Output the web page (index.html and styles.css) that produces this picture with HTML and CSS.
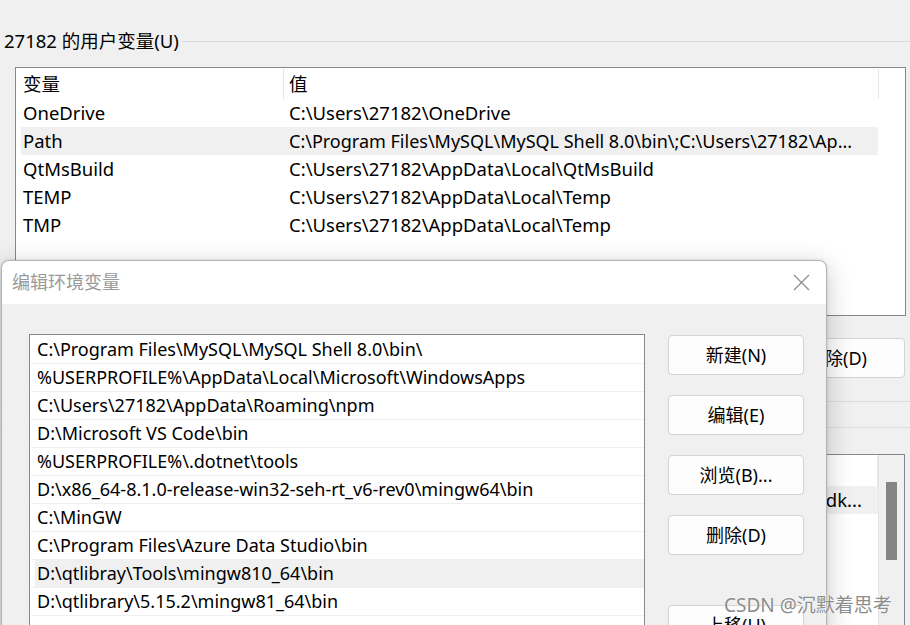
FILE: index.html
```html
<!DOCTYPE html>
<html lang="zh-CN">
<head>
<meta charset="utf-8">
<title>环境变量</title>
<link rel="stylesheet" href="styles.css">
</head>
<body>
<div class="window">
  <div class="group-title"><span>27182 的用户变量(U)</span><div class="rule"></div></div>
  <div class="lv user">
    <div class="lv-head">
      <div class="hc c1">变量</div>
      <div class="hc c2">值</div>
    </div>
    <div class="lv-row"><div class="c1">OneDrive</div><div class="c2">C:\Users\27182\OneDrive</div></div>
    <div class="lv-row sel"><div class="c1">Path</div><div class="c2 fit">C:\Program Files\MySQL\MySQL Shell 8.0\bin\;C:\Users\27182\Ap...</div></div>
    <div class="lv-row"><div class="c1">QtMsBuild</div><div class="c2">C:\Users\27182\AppData\Local\QtMsBuild</div></div>
    <div class="lv-row"><div class="c1">TEMP</div><div class="c2">C:\Users\27182\AppData\Local\Temp</div></div>
    <div class="lv-row"><div class="c1">TMP</div><div class="c2">C:\Users\27182\AppData\Local\Temp</div></div>
  </div>
  <div class="btn-row"><button class="btn">删除(D)</button></div>
  <div class="sep sep1"></div>
  <div class="sep sep2"></div>
  <div class="lv sys">
    <div class="sys-main">
      <div class="lv-head">
        <div class="hc c1">变量</div>
        <div class="hc c2">值</div>
      </div>
      <div class="lv-row sel"><div class="c1">JAVA_HOME</div><div class="c2 tail"><span>C:\Program Files\Java\jdk...</span></div></div>
    </div>
    <div class="vscroll"><div class="thumb"></div></div>
  </div>
</div>

<div class="dialog">
  <div class="dlg-title">
    <span class="dlg-caption">编辑环境变量</span>
    <svg class="dlg-close" width="17" height="17" viewBox="0 0 17 17"><path d="M1 1 L16 16 M16 1 L1 16" stroke="#8c8c8c" stroke-width="1.2" fill="none"/></svg>
  </div>
  <div class="dlg-body">
    <div class="path-list">
      <div class="p-row"><div class="p-txt">C:\Program Files\MySQL\MySQL Shell 8.0\bin\</div></div>
      <div class="p-row"><div class="p-txt">%USERPROFILE%\AppData\Local\Microsoft\WindowsApps</div></div>
      <div class="p-row"><div class="p-txt">C:\Users\27182\AppData\Roaming\npm</div></div>
      <div class="p-row"><div class="p-txt">D:\Microsoft VS Code\bin</div></div>
      <div class="p-row"><div class="p-txt">%USERPROFILE%\.dotnet\tools</div></div>
      <div class="p-row"><div class="p-txt">D:\x86_64-8.1.0-release-win32-seh-rt_v6-rev0\mingw64\bin</div></div>
      <div class="p-row"><div class="p-txt">C:\MinGW</div></div>
      <div class="p-row"><div class="p-txt">C:\Program Files\Azure Data Studio\bin</div></div>
      <div class="p-row sel"><div class="p-txt">D:\qtlibray\Tools\mingw810_64\bin</div></div>
      <div class="p-row"><div class="p-txt">D:\qtlibrary\5.15.2\mingw81_64\bin</div></div>
      <div class="p-row"><div class="p-txt"></div></div>
    </div>
    <div class="dlg-buttons">
      <button class="btn">新建(N)</button>
      <button class="btn">编辑(E)</button>
      <button class="btn">浏览(B)...</button>
      <button class="btn">删除(D)</button>
      <button class="btn move">上移(U)</button>
    </div>
  </div>
</div>

<div class="watermark">CSDN @沉默着思考</div>
</body>
</html>
```

FILE: styles.css
```css
* { box-sizing: border-box; }

html, body {
  margin: 0;
  padding: 0;
}

body {
  width: 910px;
  height: 625px;
  overflow: hidden;
  position: relative;
  background: #f0f0f0;
  font-family: "Noto Sans", "Noto Sans CJK SC", sans-serif;
  font-size: 18px;
  color: #000;
}

.window {
  padding-top: 28px;
  font-size: 18.5px;
}

.group-title {
  display: flex;
  align-items: center;
  height: 26px;
}

.group-title span {
  padding-left: 4px;
  padding-right: 3px;
  line-height: 26px;
  white-space: nowrap;
}

.group-title .rule {
  flex: 1;
  border-top: 1px solid #dadada;
}

.lv {
  margin-left: 15px;
  border: 1px solid #828790;
  background: #fff;
}

.lv.user {
  margin-top: 13px;
  width: 891px;
  height: 249px;
}

.lv-head {
  display: flex;
  height: 31px;
  padding-left: 5px;
}

.lv-head .hc {
  height: 30px;
  margin-top: 1px;
  line-height: 29px;
  border-right: 1px solid #e5e5e5;
}

.lv-head .c1 {
  width: 263px;
  padding-left: 2px;
}

.lv-head .c2 {
  width: 595px;
  padding-left: 5px;
}

.lv-row {
  display: flex;
  height: 28px;
  line-height: 28px;
  margin-left: 5px;
  width: 857px;
  white-space: nowrap;
}

.lv-row.sel {
  background: #f0f0f0;
}

.lv-row .c1 {
  width: 263px;
  padding-left: 2px;
}

.lv-row .c2 {
  flex: 1;
  padding-left: 5px;
  overflow: hidden;
}

.lv-row .c2.fit {
  font-size: 18px;
}

.lv-row .c2.tail {
  display: flex;
  justify-content: flex-end;
  padding-right: 16px;
}

.btn-row {
  display: flex;
  justify-content: flex-end;
  padding-right: 5px;
  margin-top: 22px;
}

.btn {
  width: 136px;
  height: 40px;
  border: 1px solid #d3d3d3;
  border-radius: 4px;
  background: #fdfdfd;
  font-family: inherit;
  font-size: 18px;
  color: #000;
  padding: 0;
  line-height: 36px;
}

.sep {
  height: 1px;
  background: #dcdcdc;
}

.sep1 { margin-top: 23px; }
.sep2 { margin-top: 25px; }

.lv.sys {
  margin-top: 26px;
  width: 890px;
  height: 200px;
  display: flex;
}

.sys-main {
  width: 862px;
}

.sys-main .lv-row {
  width: 857px;
}

.vscroll {
  flex: 1;
  border-left: 1px solid #e5e5e5;
  background: #f0f0f0;
  padding: 27px 0 0 7px;
}

.vscroll .thumb {
  width: 11px;
  height: 78px;
  background: #858585;
}

/* dialog */
.dialog {
  position: absolute;
  left: 1px;
  top: 260px;
  width: 826px;
  height: 400px;
  border: 1px solid #b4b4b4;
  border-radius: 8px 8px 0 0;
  background: #f0f0f0;
  box-shadow: 0 6px 26px rgba(0, 0, 0, 0.22), 0 0 3px rgba(0, 0, 0, 0.15);
}

.dlg-title {
  height: 43px;
  background: #fff;
  border-radius: 8px 8px 0 0;
  display: flex;
  align-items: center;
  justify-content: space-between;
  padding: 0 16px 0 10px;
}

.dlg-caption {
  color: #9a9a9a;
  font-size: 18px;
  line-height: 43px;
}

.dlg-close {
  display: block;
}

.dlg-body {
  display: flex;
  align-items: flex-start;
  padding: 30px 0 0 27px;
}

.path-list {
  width: 616px;
  height: 340px;
  border: 1px solid #828790;
  background: #fff;
  padding-top: 1px;
}

.p-row {
  height: 28px;
  margin-left: 1px;
  padding-left: 4px;
  border-bottom: 1px solid #f0f0f0;
  white-space: nowrap;
}

.p-txt {
  height: 27px;
  line-height: 27px;
  padding-left: 2px;
}

.p-row.sel .p-txt {
  background: #f0f0f0;
}

.dlg-buttons {
  margin-left: 23px;
  margin-top: 1px;
  display: flex;
  flex-direction: column;
  gap: 20px;
}

.dlg-buttons .move {
  margin-top: 30px;
}

.watermark {
  position: absolute;
  left: 724px;
  top: 592px;
  font-size: 19px;
  line-height: 26px;
  color: #8c8c8c;
  text-shadow: 0 0 2px #fff, 0 0 1px #fff;
  white-space: nowrap;
}
```
